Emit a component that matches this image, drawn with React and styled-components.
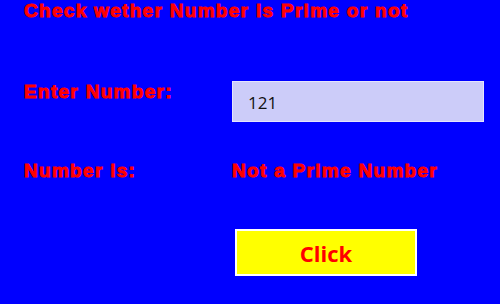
import styled, { createGlobalStyle } from "styled-components";

const GlobalStyle = createGlobalStyle`
  body {
    margin: 0;
    background: #0000ff;
  }
`;

const Page = styled.div`
  width: 500px;
  height: 304px;
  overflow: hidden;
  background: #0000ff;
  padding-left: 24px;
  box-sizing: border-box;
  font-family: "Liberation Sans", Arial, sans-serif;
  color: #ff0000;
`;

const Heading = styled.div`
  font-size: 19px;
  line-height: 22px;
  font-weight: 700;
  letter-spacing: 1.3px;
  white-space: nowrap;
  -webkit-text-stroke: 1px #ff0000;
`;

const Row = styled.div`
  display: flex;
  align-items: flex-start;
  margin-top: ${(p) => p.$gap}px;
`;

const Label = styled(Heading)`
  width: 208px;
  flex-shrink: 0;
`;

const Input = styled.input`
  box-sizing: border-box;
  width: 252px;
  height: 41px;
  border: 1px solid #e4e4fd;
  background: #ccccf9;
  padding: 1px 0 0 15px;
  font-family: "Open Sans", "Noto Sans", sans-serif;
  font-size: 17px;
  color: #111;
  outline: none;
`;

const Button = styled.button`
  margin-left: 211px;
  width: 182px;
  height: 47px;
  box-sizing: border-box;
  border: 2px solid #ffffff;
  background: #ffff00;
  color: #ff0000;
  font-family: "Open Sans", "Noto Sans", sans-serif;
  font-size: 22px;
  font-weight: 700;
  cursor: pointer;
`;

export default function App() {
  return (
    <>
      <GlobalStyle />
      <Page>
        <Heading>Check wether Number is Prime or not</Heading>
        <Row $gap={59}>
          <Label>Enter Number:</Label>
          <Input defaultValue="121" />
        </Row>
        <Row $gap={38}>
          <Label>Number is:</Label>
          <Heading>Not a Prime Number</Heading>
        </Row>
        <Row $gap={47}>
          <Button>Click</Button>
        </Row>
      </Page>
    </>
  );
}
